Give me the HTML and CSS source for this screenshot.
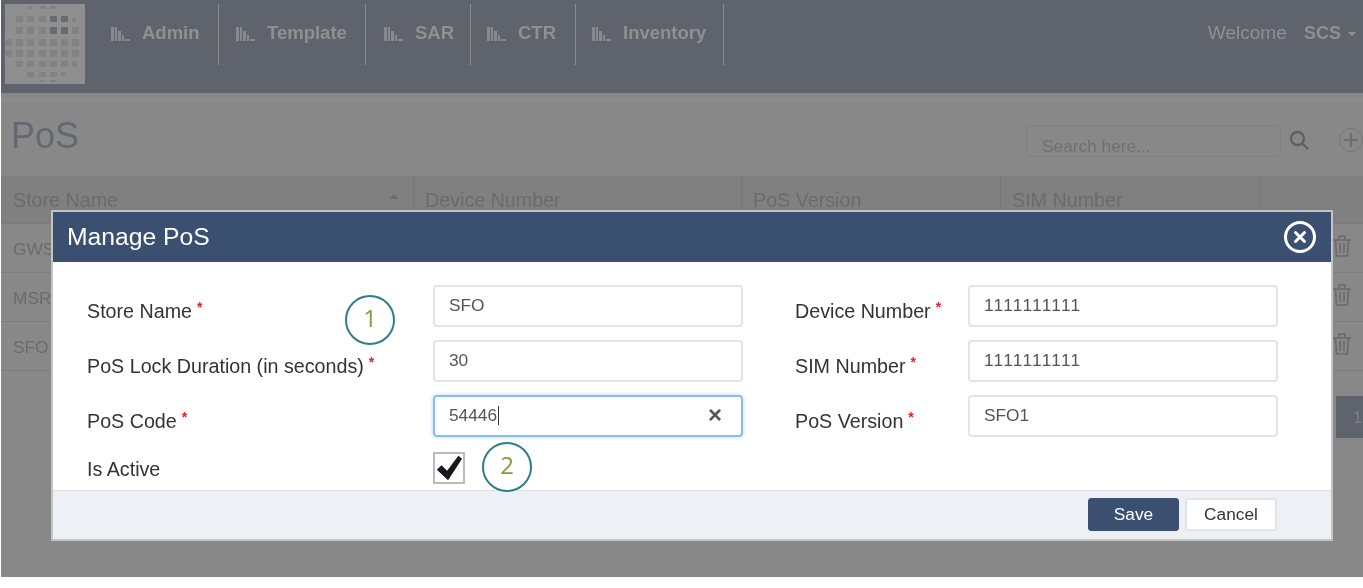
FILE: index.html
```html
<!DOCTYPE html>
<html lang="en">
<head>
<meta charset="UTF-8">
<meta name="viewport" content="width=device-width, initial-scale=1.0">
<title>Manage PoS</title>
<link rel="stylesheet" href="styles.css">
</head>
<body>

<div class="page">

  <header class="navbar">
    <div class="logo">
      <svg width="80" height="80" viewBox="0 0 80 80">
        <rect width="80" height="80" fill="#8f8f8f"/>
        <g fill="#828282">
          <rect x="22" y="2" width="5" height="3"/><rect x="34" y="2" width="7" height="3"/><rect x="45" y="2" width="6" height="3"/>
          <rect x="11" y="12" width="7" height="6"/><rect x="22" y="12" width="7" height="6"/><rect x="34" y="12" width="7" height="6"/><rect x="67" y="14" width="4" height="4"/>
          <rect x="11" y="23" width="7" height="7"/><rect x="22" y="23" width="7" height="7"/><rect x="34" y="23" width="7" height="7"/><rect x="67" y="23" width="7" height="7"/>
          <rect x="1" y="35" width="6" height="7"/><rect x="11" y="35" width="7" height="7"/><rect x="22" y="35" width="7" height="7"/><rect x="34" y="35" width="7" height="7"/><rect x="45" y="35" width="7" height="7"/><rect x="56" y="35" width="7" height="7"/><rect x="67" y="35" width="7" height="7"/>
          <rect x="1" y="46" width="6" height="7"/><rect x="11" y="46" width="7" height="7"/><rect x="22" y="46" width="7" height="7"/><rect x="34" y="46" width="7" height="7"/><rect x="45" y="46" width="7" height="7"/><rect x="56" y="46" width="7" height="7"/><rect x="67" y="46" width="7" height="7"/>
          <rect x="11" y="57" width="7" height="6"/><rect x="22" y="57" width="7" height="6"/><rect x="34" y="57" width="7" height="6"/><rect x="45" y="57" width="7" height="6"/><rect x="56" y="57" width="7" height="6"/><rect x="67" y="57" width="5" height="6"/>
          <rect x="22" y="68" width="7" height="5"/><rect x="34" y="68" width="7" height="5"/><rect x="45" y="68" width="7" height="5"/><rect x="56" y="68" width="5" height="4"/>
          <rect x="34" y="76" width="6" height="2"/><rect x="45" y="76" width="6" height="2"/>
        </g>
        <g fill="#666a72">
          <rect x="45" y="12" width="7" height="6"/><rect x="56" y="12" width="7" height="6"/>
          <rect x="45" y="23" width="7" height="7"/><rect x="56" y="23" width="7" height="7"/>
        </g>
      </svg>
    </div>
    <nav class="menu">
      <a class="menu-item item-admin"><svg class="bars" viewBox="0 0 19 14"><path d="M0 0h3v14H0zM4 0h2v14H4zM7 4h3v10H7zM11 8h2v6h-2zM14 12h5v2h-5z"/></svg>Admin</a>
      <a class="menu-item item-template"><svg class="bars" viewBox="0 0 19 14"><path d="M0 0h3v14H0zM4 0h2v14H4zM7 4h3v10H7zM11 8h2v6h-2zM14 12h5v2h-5z"/></svg>Template</a>
      <a class="menu-item item-sar"><svg class="bars" viewBox="0 0 19 14"><path d="M0 0h3v14H0zM4 0h2v14H4zM7 4h3v10H7zM11 8h2v6h-2zM14 12h5v2h-5z"/></svg>SAR</a>
      <a class="menu-item item-ctr"><svg class="bars" viewBox="0 0 19 14"><path d="M0 0h3v14H0zM4 0h2v14H4zM7 4h3v10H7zM11 8h2v6h-2zM14 12h5v2h-5z"/></svg>CTR</a>
      <a class="menu-item item-inventory"><svg class="bars" viewBox="0 0 19 14"><path d="M0 0h3v14H0zM4 0h2v14H4zM7 4h3v10H7zM11 8h2v6h-2zM14 12h5v2h-5z"/></svg>Inventory</a>
    </nav>
    <div class="welcome">Welcome <b>SCS</b><span class="caret"></span></div>
  </header>

  <section class="content">
    <div class="title-row">
      <h1>PoS</h1>
      <div class="tools">
        <div class="search">Search here...</div>
        <svg class="tool-icon" width="22" height="22" viewBox="0 0 22 22" fill="none" stroke="#5f5f5f" stroke-width="2.4"><circle cx="9.5" cy="9.5" r="6.5"/><path d="M14.5 14.5l5 5" stroke-linecap="round"/></svg>
        <svg class="tool-plus" width="26" height="26" viewBox="0 0 26 26" fill="none" stroke="#6c6c6c"><circle cx="13" cy="13" r="11.5" stroke="#777"/><path d="M13 6v14M6 13h14" stroke-width="2.2"/></svg>
      </div>
    </div>
    <div class="table-head">
      <div class="th th-store">Store Name<span class="sort"></span></div>
      <div class="th th-device">Device Number</div>
      <div class="th th-version">PoS Version</div>
      <div class="th th-sim">SIM Number</div>
    </div>
    <div class="table-row">GWS</div>
    <div class="table-row">MSR</div>
    <div class="table-row">SFO</div>
    <div class="pager">1</div>
  </section>

  <svg class="trash trash-1" width="20" height="24" viewBox="0 0 20 24" fill="none" stroke="#6a6a6a" stroke-width="1.6"><path d="M1 6h18M7 5V2h6v3M3.500 6l1 16h11l1-16M8 9v10M12 9v10"/></svg>
  <svg class="trash trash-2" width="20" height="24" viewBox="0 0 20 24" fill="none" stroke="#6a6a6a" stroke-width="1.6"><path d="M1 6h18M7 5V2h6v3M3.500 6l1 16h11l1-16M8 9v10M12 9v10"/></svg>
  <svg class="trash trash-3" width="20" height="24" viewBox="0 0 20 24" fill="none" stroke="#6a6a6a" stroke-width="1.6"><path d="M1 6h18M7 5V2h6v3M3.500 6l1 16h11l1-16M8 9v10M12 9v10"/></svg>

  <div class="modal">
    <div class="modal-header">
      <span class="modal-title">Manage PoS</span>
      <svg width="34" height="34" viewBox="0 0 34 34" fill="none" stroke="#fff"><circle cx="17" cy="17" r="14.500" stroke-width="3"/><path d="M12.500 12.500l9 9M21.500 12.500l-9 9" stroke-width="3" stroke-linecap="round"/></svg>
    </div>
    <div class="modal-body">
      <div class="form-col col-left">
        <label class="field-label">Store Name<span class="req">*</span></label>
        <div class="input">SFO</div>
        <label class="field-label">PoS Lock Duration (in seconds)<span class="req">*</span></label>
        <div class="input">30</div>
        <label class="field-label">PoS Code<span class="req">*</span></label>
        <div class="input input-focus"><span>54446<span class="cursor"></span></span><span class="clear">×</span></div>
        <label class="field-label label-active">Is Active</label>
        <div class="checkbox">
          <svg width="28" height="28" viewBox="0 0 30 30"><path d="M2 17l5-5 6 6L25 2l4 3-15 23z" fill="#15181f"/></svg>
        </div>
      </div>
      <div class="form-col col-right">
        <label class="field-label">Device Number<span class="req">*</span></label>
        <div class="input">1111111111</div>
        <label class="field-label">SIM Number<span class="req">*</span></label>
        <div class="input">1111111111</div>
        <label class="field-label">PoS Version<span class="req">*</span></label>
        <div class="input">SFO1</div>
      </div>
    </div>
    <div class="modal-footer">
      <button class="btn btn-save">Save</button>
      <button class="btn btn-cancel">Cancel</button>
    </div>
  </div>

  <div class="callout callout-1">1</div>
  <div class="callout callout-2">2</div>

</div>

</body>
</html>
```

FILE: styles.css
```css
body {
  margin: 0;
  padding: 0;
  background-color: #fff;
  font-family: "Liberation Sans", Arial, sans-serif;
  color: #333;
}

.page {
  position: relative;
  height: 577px;
  margin-left: 1px;
  background-color: #888;
  overflow: hidden;
  filter: blur(0.4px);
}

/* top bar */
.navbar {
  display: flex;
  height: 93px;
  background-color: #5f636c;
  color: #909090;
}
.logo {
  margin: 4px 0 0 4px;
  height: 80px;
}
.logo svg {
  display: block;
}
.menu {
  display: flex;
  align-items: flex-start;
  margin-top: 4px;
  margin-left: 26px;
}
.menu-item {
  display: flex;
  align-items: center;
  height: 61px;
  padding: 0 13px 4px 0;
  box-sizing: border-box;
  border-right: 1px solid #8a8c90;
  font-size: 18.5px;
  font-weight: bold;
  margin-right: 16px;
}
.item-admin { width: 108px; }
.item-template { width: 131px; padding-left: 1px; }
.item-sar { width: 89px; padding-left: 2px; }
.item-ctr { width: 89px; }
.item-inventory { width: 132px; }
.bars {
  flex: none;
  width: 19px;
  height: 14px;
  fill: #8a8a8a;
  margin: 2px 12px 0 0;
}
.welcome {
  margin: 22px 0 0 auto;
  padding-right: 7px;
  font-size: 19px;
  line-height: 21px;
}
.welcome b {
  margin-left: 12px;
  font-size: 18px;
}
.caret {
  display: inline-block;
  margin-left: 7px;
  vertical-align: 3px;
  border-top: 4px solid #909090;
  border-left: 4px solid transparent;
  border-right: 4px solid transparent;
}

/* page behind the dialog */
.content {
  position: relative;
  color: #6b6b6b;
}
.title-row {
  display: flex;
  justify-content: space-between;
  height: 77px;
  margin-top: 6px;
  border-top: 1px solid #8e8e8e;
  box-sizing: border-box;
}
h1 {
  margin: 15px 0 0 10px;
  font-size: 36px;
  font-weight: normal;
  line-height: 42px;
  color: #636872;
}
.tools {
  display: flex;
  align-items: flex-start;
  margin-top: 25px;
}
.search {
  width: 255px;
  height: 32px;
  padding: 10px 0 0 15px;
  box-sizing: border-box;
  border: 1px solid #7f7f7f;
  border-radius: 4px;
  font-size: 17.3px;
  color: #707070;
}
.tool-icon {
  margin: 4px 0 0 7px;
}
.tool-plus {
  margin: 2px -1px 0 28px;
}
.table-head {
  display: flex;
  height: 48px;
  background-color: #808080;
  font-size: 19.7px;
  border-bottom: 1px solid #7b7b7b;
  box-sizing: border-box;
}
.th {
  padding: 13px 0 0 11px;
  box-sizing: border-box;
  border-right: 1px solid #787878;
}
.th-store { position: relative; width: 413px; padding-left: 12px; }
.th-device { width: 328px; }
.th-version { width: 259px; }
.th-sim { width: 260px; }
.sort {
  position: absolute;
  top: 18px;
  right: 14px;
  border-bottom: 5px solid #6f6f6f;
  border-left: 5px solid transparent;
  border-right: 5px solid transparent;
}
.table-row {
  height: 49px;
  padding: 15px 0 0 12px;
  box-sizing: border-box;
  border-bottom: 1px solid #7d7d7d;
  font-size: 17.3px;
}
.pager {
  position: absolute;
  top: 297px;
  right: 0;
  width: 27px;
  height: 42px;
  padding: 13px 0 0 17px;
  box-sizing: border-box;
  background-color: #5f636c;
  color: #808080;
  font-size: 16px;
}
.trash {
  position: absolute;
  left: 1331px;
}
.trash-1 { top: 234px; }
.trash-2 { top: 283px; }
.trash-3 { top: 332px; }

/* dialog */
.modal {
  position: absolute;
  left: 50px;
  top: 210px;
  width: 1282px;
  height: 331px;
  display: flex;
  flex-direction: column;
  box-sizing: border-box;
  border: 2px solid #c4c4c4;
  background-color: #fff;
}
.modal-header {
  display: flex;
  justify-content: space-between;
  align-items: center;
  height: 50px;
  flex: none;
  padding: 0 14px 0 14px;
  box-sizing: border-box;
  background-color: #3b5070;
}
.modal-title {
  color: #fff;
  font-size: 24.7px;
}
.modal-body {
  flex: 1;
  display: flex;
  padding: 23px 0 0 34px;
}
.form-col {
  display: grid;
  row-gap: 13px;
  grid-auto-rows: 42px;
  align-items: center;
}
.col-left {
  grid-template-columns: 346px 310px;
  margin-right: 52px;
  grid-template-rows: 42px 42px 42px 32px;
}
.col-right {
  grid-template-columns: 173px 310px;
  align-content: start;
}
.field-label {
  font-size: 19.7px;
  color: #333;
  padding-top: 10px;
}
.label-active {
  padding-top: 0;
  margin-top: 6px;
}
.req {
  position: relative;
  top: -6px;
  margin-left: 5px;
  color: #e8202a;
  font-size: 14px;
  font-weight: bold;
}
.input {
  display: flex;
  justify-content: space-between;
  align-items: center;
  height: 42px;
  padding: 0 14px 2px;
  box-sizing: border-box;
  border: 2px solid #e2e4e6;
  border-radius: 4px;
  font-size: 17.3px;
  font-kerning: none;
  color: #555;
}
.input-focus {
  border: 2px solid #85bdec;
  box-shadow: 0 0 4px #b5d8f5;
}
.cursor {
  display: inline-block;
  width: 1px;
  height: 19px;
  margin-left: 1px;
  vertical-align: -4px;
  background-color: #333;
}
.clear {
  padding-right: 5px;
  font-size: 24px;
  line-height: 24px;
  font-weight: bold;
  color: #555;
}
.checkbox {
  width: 32px;
  height: 32px;
  margin-top: 4px;
  box-sizing: border-box;
  border: 2px solid #bbb;
  background-color: #fff;
}
.checkbox svg {
  display: block;
}
.modal-footer {
  flex: none;
  display: flex;
  justify-content: flex-end;
  gap: 6px;
  height: 49px;
  padding: 7px 54px 0 0;
  box-sizing: border-box;
  border-top: 1px solid #dcdfe3;
  background-color: #edf0f4;
}
.btn {
  height: 33px;
  border-radius: 3px;
  font-family: "Liberation Sans", Arial, sans-serif;
  font-size: 17.3px;
}
.btn-save {
  width: 91px;
  border: 1px solid #3b5070;
  background-color: #3b5070;
  color: #fff;
}
.btn-cancel {
  width: 92px;
  border: 2px solid #dfe4ea;
  background-color: #fff;
  color: #333;
}

/* numbered notes drawn on top of the screenshot */
.callout {
  position: absolute;
  width: 50px;
  height: 50px;
  box-sizing: border-box;
  border: 2px solid #2f7d8c;
  border-radius: 50%;
  text-align: center;
  font-family: "Open Sans", sans-serif;
  font-size: 24px;
  line-height: 42px;
  color: #7b9f3c;
}
.callout-1 { left: 344px; top: 295px; }
.callout-2 { left: 481px; top: 442px; }
```
